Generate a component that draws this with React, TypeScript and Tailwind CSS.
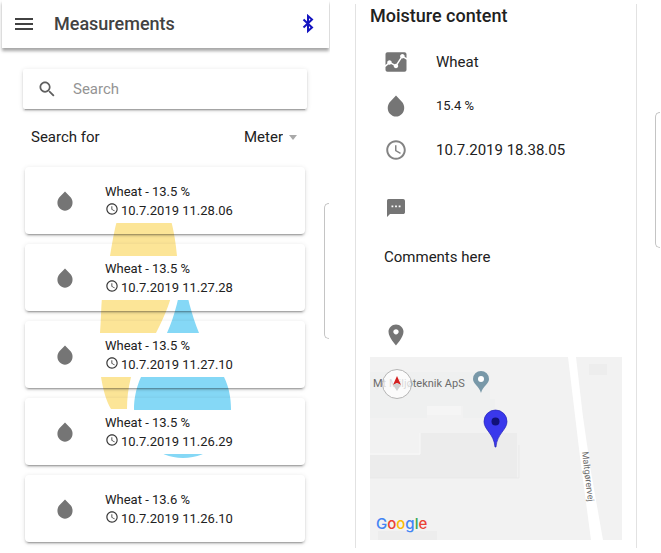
import { useState } from 'react';
import {
  IoMdAnalytics,
  IoMdMenu,
  IoMdPin,
  IoMdSearch,
  IoMdText,
  IoMdTime,
  IoMdWater,
} from 'react-icons/io';

const measurements = [
  { name: 'Wheat', moisture: '13.5 %', time: '10.7.2019 11.28.06' },
  { name: 'Wheat', moisture: '13.5 %', time: '10.7.2019 11.27.28' },
  { name: 'Wheat', moisture: '13.5 %', time: '10.7.2019 11.27.10' },
  { name: 'Wheat', moisture: '13.5 %', time: '10.7.2019 11.26.29' },
  { name: 'Wheat', moisture: '13.6 %', time: '10.7.2019 11.26.10' },
];

const cardShadow =
  'shadow-[0_3px_1px_-2px_rgba(0,0,0,0.2),0_2px_2px_0_rgba(0,0,0,0.14),0_1px_5px_0_rgba(0,0,0,0.12)]';

function BluetoothIcon() {
  return (
    <svg viewBox="0 0 20 20" className="w-5 h-5" fill="none" stroke="#1414c0" strokeWidth="2" aria-hidden="true">
      <path d="M5.5 5.500L14 13.500L10 17V2L14 5.500L5.500 13.500" />
    </svg>
  );
}

// Logo behind the list, seen through the transparent parts of the cards
function Watermark() {
  return (
    <svg
      viewBox="0 0 134 242"
      className="absolute top-[52px] left-1/2 -ml-[66px] w-[134px] h-[242px]"
      aria-hidden="true"
    >
      <path d="M19 0H71C75 13 77 28 78 39L72 80C68 94 62 106 57 116C45 133 35 145 32 160C29 172 28 182 28 192H12C7 184 4 172 2 160C0 145 0 130 1 116C2 103 2 92 3 80C5 66 8 53 11 39C13 27 15 13 19 0Z" fill="#fce597" />
      <path d="M84 56C81 76 76 99 68 116C60 132 48 145 42 160C37 171 35 182 35 192C37 221 58 241 84 241C111 241 132 221 132 192C132 181 130 170 125 160C117 145 107 132 100 116C93 99 87 76 84 56Z" fill="#85d8f6" />
    </svg>
  );
}

function MeasurementsScreen() {
  const [query, setQuery] = useState('');

  return (
    <section className="relative flex flex-col overflow-hidden">
      <header className="flex items-center h-12 ml-0.5 mr-px pl-2.5 pr-[11px] bg-white shadow-[0_3px_3px_rgba(0,0,0,0.35)] text-[#424242]">
        <button aria-label="Menu">
          <IoMdMenu className="w-6 h-6" />
        </button>
        <h1 className="flex-1 ml-[18px] text-lg font-medium">Measurements</h1>
        <button aria-label="Bluetooth">
          <BluetoothIcon />
        </button>
      </header>

      <div className="px-[23px] pt-[21px]">
        <label className={`flex items-center h-10 rounded-xs bg-white pl-3.5 gap-4 ${cardShadow}`}>
          <IoMdSearch className="w-5 h-5 text-[#5f5f5f]" />
          <input
            aria-label="Search"
            placeholder="Search"
            value={query}
            onChange={(e) => setQuery(e.target.value)}
            className="flex-1 min-w-0 text-[15px] outline-none placeholder:text-[#949494]"
          />
        </label>

        <div className="flex items-center justify-between h-14 pl-2 pr-2.5 text-[15px]">
          <label htmlFor="search-for">Search for</label>
          <div className="relative flex items-center">
            <select id="search-for" className="appearance-none pr-3.5 outline-none">
              <option>Meter</option>
            </select>
            <span className="absolute right-0 border-x-4 border-t-5 border-x-transparent border-t-[#a9a9a9] pointer-events-none" />
          </div>
        </div>

        <div className="relative pt-0.5">
          <Watermark />
          <ul className="relative flex flex-col gap-2.5 px-0.5">
            {measurements.map((m) => (
              <li key={m.time} className={`pt-3 pb-[11px] rounded-sm ${cardShadow}`}>
                <a href="#details" className="flex items-center h-11 bg-white pl-[29px]">
                  <IoMdWater className="w-[22px] h-[22px] text-[#757575]" />
                  <span className="ml-[29px] text-[13px] leading-[19px]">
                    <span className="block">
                      {m.name} - {m.moisture}
                    </span>
                    <span className="flex items-start gap-0.5">
                      <IoMdTime className="w-3.5 h-3.5 mt-px" />
                      {m.time}
                    </span>
                  </span>
                </a>
              </li>
            ))}
          </ul>
        </div>
      </div>
      <EdgeHandle className="top-[203px]" />
    </section>
  );
}

// Pull-out panel handle of the phone, cut by the screen edge
function EdgeHandle({ className }: { className: string }) {
  return (
    <div
      className={`absolute right-px w-[5px] h-[136px] rounded-l-md border border-r-0 border-[#c4c4c4] bg-white ${className}`}
    />
  );
}

function MapView() {
  return (
    <svg viewBox="0 0 252 183" className="block w-full" role="img" aria-label="Map">
      <rect width="252" height="183" fill="#f2f2f2" />
      <path d="M0 15H120V42H125V61H93V49H57V61H0Z" fill="#eff0f0" />
      <path d="M57 49H91V58H57Z" fill="#f5f5f5" />
      <path d="M50 76H147V121H0V98H50Z" fill="#ececec" />
      <path d="M0 97H50V76" fill="none" stroke="#f8f8f8" />
      <path d="M0 121H149V88" fill="none" stroke="#e9e9e9" />
      <path d="M219 7H237V18H219Z" fill="#ededed" />
      <path d="M8 174H67V183H8Z" fill="#ededed" />
      <path d="M198 0H206L213 60L221 115L233 183H221L210 100Z" fill="#fff" />

      <text x="3" y="30" fontSize="11" fill="#6b6b6b">
        Mt Miljøteknik ApS
      </text>
      <path d="M111 14a8 8 0 0 1 8 8c0 5-6 7-8 14c-2-7-8-9-8-14a8 8 0 0 1 8-8Z" fill="#7898a8" />
      <circle cx="111" cy="22" r="3" fill="#fff" />

      <circle cx="27" cy="27" r="14.5" fill="#fff" fillOpacity="0.75" stroke="#b5b5b5" />
      <path d="M27 19L31 28L27 26L23 28Z" fill="#d32020" />
      <path d="M23 28L27 26L31 28L27 34Z" fill="#d0d0d0" />

      <path d="M125.5 53a11.5 11.5 0 0 1 11.5 11.5c0 8.5-10 12-11 25.5h-1c-1-13.5-11-17-11-25.5a11.5 11.5 0 0 1 11.5-11.5Z" fill="#3a38ec" stroke="#2422b8" strokeWidth="0.7" />
      <circle cx="125.5" cy="64.5" r="4" fill="#111178" />

      <text x="0" y="0" fontSize="9" fill="#6b6b6b" transform="translate(212 95) rotate(83)">
        Maltgørervej
      </text>

      <text x="6" y="172" fontSize="15" className="font-['Inter',sans-serif] font-medium">
        <tspan fill="#4285f4">G</tspan>
        <tspan fill="#ea4335">o</tspan>
        <tspan fill="#fbbc05">o</tspan>
        <tspan fill="#4285f4">g</tspan>
        <tspan fill="#34a853">l</tspan>
        <tspan fill="#ea4335">e</tspan>
      </text>
    </svg>
  );
}

function DetailsScreen() {
  return (
    <section id="details" className="relative pt-1 px-6 overflow-hidden">
      <article className="border-x border-[#e2e2e2] px-3.5 pb-2">
        <h2 className="text-lg leading-6 font-medium">Moisture content</h2>
        <ul className="pt-3 text-[15px]">
          <li className="flex items-center h-11 pl-3.5 gap-7">
            <IoMdAnalytics className="w-6 h-6 text-[#757575]" />
            Wheat
          </li>
          <li className="flex items-center h-11 pl-3.5 gap-7 text-[13px]">
            <IoMdWater className="w-6 h-6 text-[#757575]" />
            15.4 %
          </li>
          <li className="flex items-center h-11 pl-3.5 gap-7">
            <IoMdTime className="w-6 h-6 text-[#757575]" />
            10.7.2019 18.38.05
          </li>
        </ul>
        <div className="pt-6 pl-3.5 text-[15px]">
          <IoMdText className="w-6 h-6 text-[#757575]" aria-label="Comments" />
          <p className="mt-[25px] h-16 leading-6">Comments here</p>
          <IoMdPin className="w-6 h-6 mt-3.5 mb-2.5 text-[#757575]" aria-label="Location" />
        </div>
        <MapView />
      </article>
      <EdgeHandle className="top-[112px]" />
    </section>
  );
}

export default function App() {
  return (
    <main className="grid grid-cols-2 gap-px bg-white font-['Roboto',sans-serif] text-[#212121]">
      <MeasurementsScreen />
      <DetailsScreen />
    </main>
  );
}
